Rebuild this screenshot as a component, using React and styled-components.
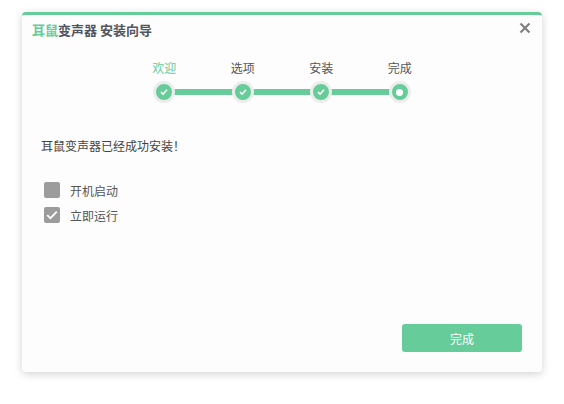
import React from 'react';
import styled, { createGlobalStyle } from 'styled-components';

const GREEN = '#66cc99';

const GlobalStyle = createGlobalStyle`
    html, body {
        margin: 0;
        padding: 0;
        background: #fff;
    }
    body {
        font-family: "Noto Sans CJK SC", "Noto Sans", sans-serif;
        font-size: 12px;
        color: #555;
    }
`;

const steps = ['欢迎', '选项', '安装', '完成'];

export default function App() {
    return (
        <Page>
            <GlobalStyle />
            <Dialog>
                <Header>
                    <Title>
                        <Brand>耳鼠</Brand>
                        变声器 安装向导
                    </Title>
                    <Close aria-label="close">
                        <svg width="12" height="12" viewBox="0 0 12 12">
                            <path d="M1.5 1.5 L10.5 10.5 M10.5 1.5 L1.5 10.5" stroke="#808080" strokeWidth="2.2" />
                        </svg>
                    </Close>
                </Header>
                <Stepper>
                    <Labels>
                        {steps.map((s, i) => (
                            <StepLabel key={s} active={i === 0}>{s}</StepLabel>
                        ))}
                    </Labels>
                    <Track>
                        {steps.map((s, i) => (
                            <Dot key={s}>
                                {i < steps.length - 1 ? (
                                    <svg width="8" height="8" viewBox="0 0 8 8">
                                        <path d="M1 4.2 L3.1 6.2 L7 1.8" fill="none" stroke="#fff" strokeWidth="1.6" />
                                    </svg>
                                ) : (
                                    <Inner />
                                )}
                            </Dot>
                        ))}
                    </Track>
                </Stepper>
                <Body>
                    <Message>耳鼠变声器已经成功安装！</Message>
                    <Options>
                        <Option>
                            <Box />
                            开机启动
                        </Option>
                        <Option>
                            <Box>
                                <svg width="12" height="10" viewBox="0 0 12 10">
                                    <path d="M1.2 5.2 L4.4 8.2 L10.8 1.6" fill="none" stroke="#fff" strokeWidth="1.8" />
                                </svg>
                            </Box>
                            立即运行
                        </Option>
                    </Options>
                </Body>
                <Footer>
                    <Button>完成</Button>
                </Footer>
            </Dialog>
        </Page>
    );
}

const Page = styled.div`
    padding: 12px 0 32px 22px;
`;

const Dialog = styled.div`
    width: 520px;
    height: 360px;
    box-sizing: border-box;
    background: #fdfdfd;
    border-top: 3px solid ${GREEN};
    border-radius: 4px;
    box-shadow: 0 2px 8px rgba(0, 0, 0, 0.18);
    display: flex;
    flex-direction: column;
`;

const Header = styled.div`
    height: 29px;
    display: flex;
    align-items: center;
    justify-content: space-between;
    padding: 0 11px 0 10px;
`;

const Title = styled.div`
    font-size: 13px;
    font-weight: bold;
    color: #505560;
`;

const Brand = styled.span`
    color: ${GREEN};
`;

const Close = styled.div`
    width: 12px;
    height: 12px;
    display: flex;
    margin-top: -4px;
`;

const Stepper = styled.div`
    align-self: center;
    width: 314px;
    margin-top: 13px;
`;

const Labels = styled.div`
    display: grid;
    grid-template-columns: repeat(4, 1fr);
    height: 20px;
    align-items: center;
`;

const StepLabel = styled.div`
    text-align: center;
    font-size: 12px;
    color: ${(p) => (p.active ? GREEN : '#555')};
`;

const Track = styled.div`
    position: relative;
    display: grid;
    grid-template-columns: repeat(4, 1fr);
    justify-items: center;
    margin-top: 4px;
    &::before {
        content: '';
        position: absolute;
        left: 39px;
        right: 39px;
        top: 8px;
        height: 6px;
        background: ${GREEN};
    }
`;

const Dot = styled.div`
    position: relative;
    width: 16px;
    height: 16px;
    border-radius: 50%;
    background: ${GREEN};
    border: 3px solid #ececec;
    display: flex;
    align-items: center;
    justify-content: center;
`;

const Inner = styled.div`
    width: 7px;
    height: 7px;
    border-radius: 50%;
    background: #fff;
`;

const Body = styled.div`
    flex: 1;
    padding: 33px 0 0 19px;
`;

const Message = styled.div`
    font-size: 12px;
    color: #444;
    line-height: 20px;
`;

const Options = styled.div`
    margin-top: 26px;
    padding-left: 3px;
    display: flex;
    flex-direction: column;
    gap: 9px;
`;

const Option = styled.label`
    display: flex;
    align-items: center;
    gap: 10px;
    font-size: 12px;
    color: #555;
    height: 16px;
`;

const Box = styled.span`
    width: 16px;
    height: 16px;
    border-radius: 2px;
    background: #9c9c9c;
    display: flex;
    align-items: center;
    justify-content: center;
`;

const Footer = styled.div`
    display: flex;
    justify-content: flex-end;
    padding: 0 20px 20px 0;
`;

const Button = styled.button`
    width: 120px;
    height: 28px;
    border: none;
    border-radius: 3px;
    background: ${GREEN};
    color: #fff;
    font-family: inherit;
    font-size: 12px;
    cursor: pointer;
`;
